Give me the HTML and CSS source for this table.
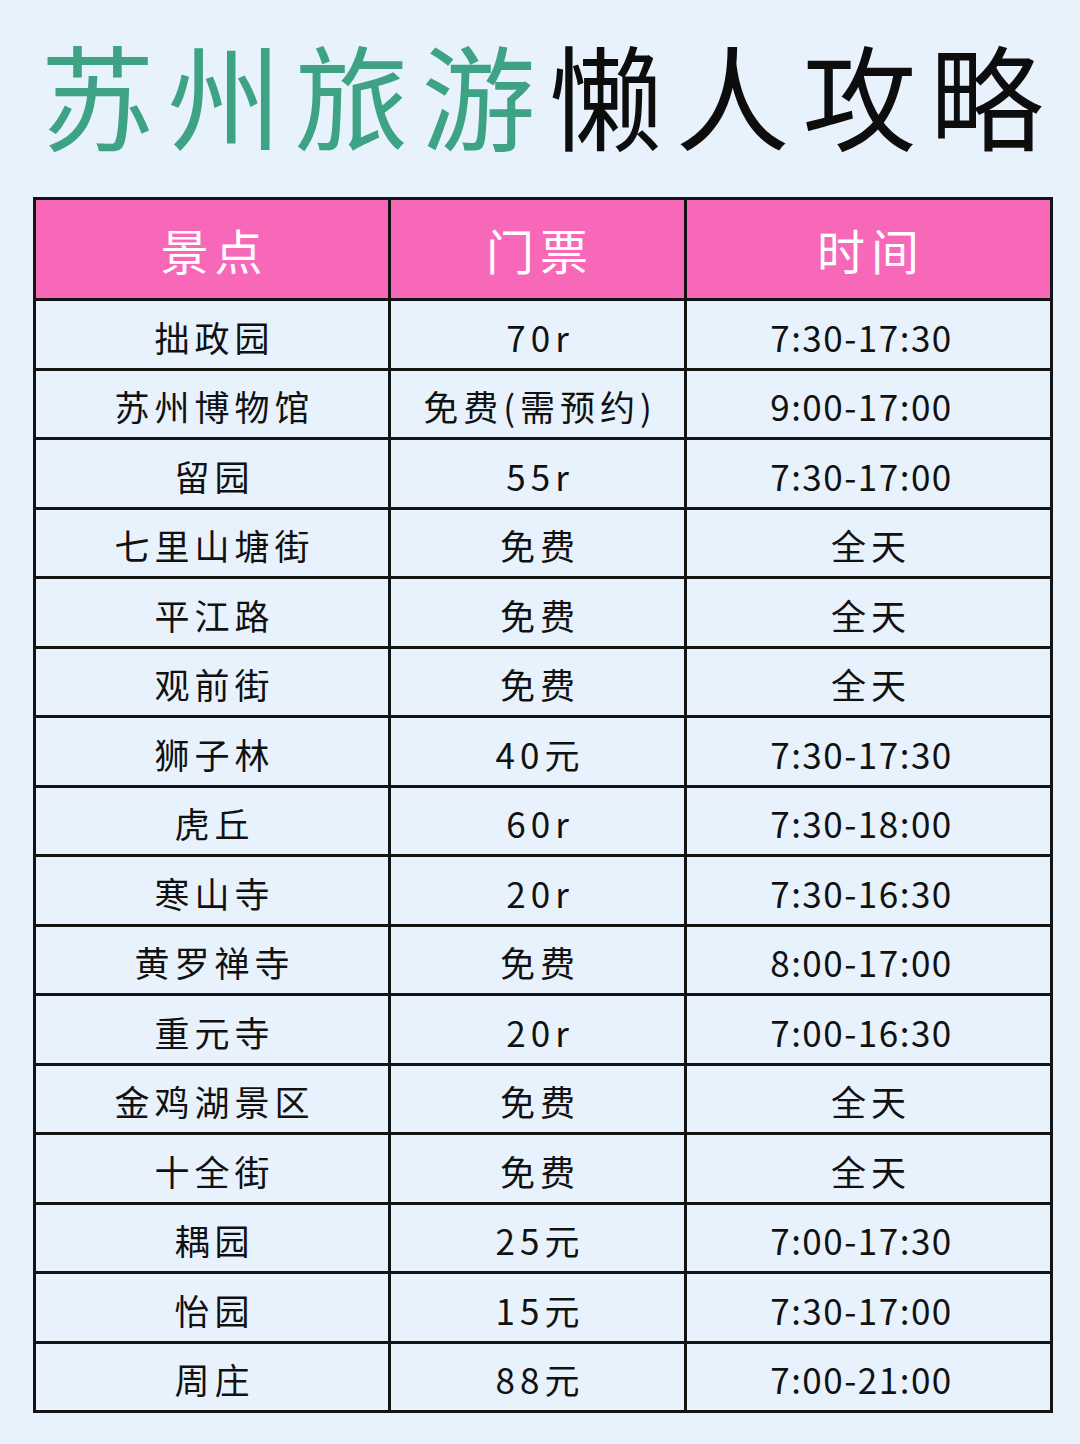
FILE: index.html
```html
<!DOCTYPE html>
<html lang="zh-CN">
<head>
<meta charset="utf-8">
<title>苏州旅游懒人攻略</title>
<link rel="stylesheet" href="styles.css">
</head>
<body>
<div class="page">
  <h1 class="title"><span class="green">苏州旅游</span><span class="black">懒人攻略</span></h1>
  <div class="table">
    <div class="cell head">景点</div><div class="cell head">门票</div><div class="cell head">时间</div>
    <div class="cell">拙政园</div><div class="cell">70r</div><div class="cell num">7:30-17:30</div>
    <div class="cell">苏州博物馆</div><div class="cell">免费(需预约)</div><div class="cell num">9:00-17:00</div>
    <div class="cell">留园</div><div class="cell">55r</div><div class="cell num">7:30-17:00</div>
    <div class="cell">七里山塘街</div><div class="cell">免费</div><div class="cell">全天</div>
    <div class="cell">平江路</div><div class="cell">免费</div><div class="cell">全天</div>
    <div class="cell">观前街</div><div class="cell">免费</div><div class="cell">全天</div>
    <div class="cell">狮子林</div><div class="cell">40元</div><div class="cell num">7:30-17:30</div>
    <div class="cell">虎丘</div><div class="cell">60r</div><div class="cell num">7:30-18:00</div>
    <div class="cell">寒山寺</div><div class="cell">20r</div><div class="cell num">7:30-16:30</div>
    <div class="cell">黄罗禅寺</div><div class="cell">免费</div><div class="cell num">8:00-17:00</div>
    <div class="cell">重元寺</div><div class="cell">20r</div><div class="cell num">7:00-16:30</div>
    <div class="cell">金鸡湖景区</div><div class="cell">免费</div><div class="cell">全天</div>
    <div class="cell">十全街</div><div class="cell">免费</div><div class="cell">全天</div>
    <div class="cell">耦园</div><div class="cell">25元</div><div class="cell num">7:00-17:30</div>
    <div class="cell">怡园</div><div class="cell">15元</div><div class="cell num">7:30-17:00</div>
    <div class="cell">周庄</div><div class="cell">88元</div><div class="cell num">7:00-21:00</div>
  </div>
</div>
</body>
</html>
```
FILE: styles.css
```css
html, body {
  margin: 0;
  padding: 0;
  background: #e8f2fc;
}
.page {
  width: 1080px;
  height: 1444px;
  background: #e8f2fc;
  font-family: "Noto Sans CJK SC", "Noto Sans", sans-serif;
  color: #111;
}
.title {
  margin: 0;
  height: 197px;
  display: flex;
  align-items: center;
  justify-content: center;
  font-size: 114px;
  font-weight: 400;
  letter-spacing: 13px;
  line-height: 1;
  padding-left: 17px;
  padding-bottom: 12px;
  box-sizing: border-box;
}
.green { color: #3ea385; }
.black { color: #0d0d0d; }
.table {
  margin-left: 33px;
  width: 1020px;
  box-sizing: border-box;
  display: grid;
  grid-template-columns: 352px 293px 363px;
  grid-template-rows: 98px repeat(16, 66.5px);
  gap: 3px;
  padding: 3px;
  background: #141414;
}
.cell {
  background: #e8f2fc;
  display: flex;
  align-items: center;
  justify-content: center;
  font-size: 35px;
  letter-spacing: 5px;
  text-indent: 5px;
  padding-top: 4px;
  box-sizing: border-box;
}
.cell.num {
  letter-spacing: 1.5px;
  text-indent: 0;
  padding-right: 14px;
}
.cell.head {
  background: #f768b9;
  color: #fff;
  font-size: 48px;
  letter-spacing: 6px;
  padding-top: 0;
}
```
